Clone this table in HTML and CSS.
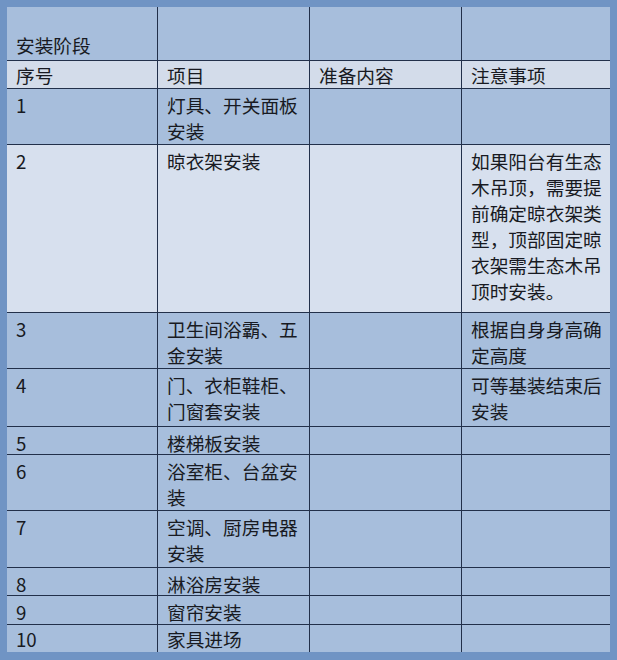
FILE: index.html
```html
<!DOCTYPE html>
<html lang="zh-CN">
<head>
<meta charset="utf-8">
<title>安装阶段</title>
<link rel="stylesheet" href="styles.css">
</head>
<body>
<div class="frame">
  <div class="plan">
    <div class="cell stage">安装阶段</div><div class="cell stage"></div><div class="cell stage"></div><div class="cell stage end"></div>

    <div class="cell head">序号</div><div class="cell head">项目</div><div class="cell head">准备内容</div><div class="cell head end">注意事项</div>

    <div class="cell">1</div><div class="cell">灯具、开关面板安装</div><div class="cell"></div><div class="cell end"></div>

    <div class="cell light">2</div><div class="cell light">晾衣架安装</div><div class="cell light"></div><div class="cell light end">如果阳台有生态木吊顶，需要提前确定晾衣架类型，顶部固定晾衣架需生态木吊顶时安装。</div>

    <div class="cell">3</div><div class="cell">卫生间浴霸、五金安装</div><div class="cell"></div><div class="cell end">根据自身身高确定高度</div>

    <div class="cell">4</div><div class="cell">门、衣柜鞋柜、门窗套安装</div><div class="cell"></div><div class="cell end">可等基装结束后安装</div>

    <div class="cell">5</div><div class="cell">楼梯板安装</div><div class="cell"></div><div class="cell end"></div>

    <div class="cell">6</div><div class="cell">浴室柜、台盆安装</div><div class="cell"></div><div class="cell end"></div>

    <div class="cell">7</div><div class="cell">空调、厨房电器安装</div><div class="cell"></div><div class="cell end"></div>

    <div class="cell">8</div><div class="cell">淋浴房安装</div><div class="cell"></div><div class="cell end"></div>

    <div class="cell">9</div><div class="cell">窗帘安装</div><div class="cell"></div><div class="cell end"></div>

    <div class="cell last">10</div><div class="cell last">家具进场</div><div class="cell last"></div><div class="cell last end"></div>
  </div>
</div>
</body>
</html>
```
FILE: styles.css
```css
html, body {
  margin: 0;
  padding: 0;
  background: #7094c4;
}
.frame {
  width: 617px;
  height: 660px;
  box-sizing: border-box;
  padding: 7px 7px 8px 7px;
  background: #7094c4;
  overflow: hidden;
}
.plan {
  display: grid;
  grid-template-columns: 151px 152px 152px 148px;
  grid-template-rows: 54px 28px 56px 168px 56px 58px 28px 56px 57px 28px 29px 27px;
  width: 603px;
  height: 645px;
  font-family: "Noto Sans CJK SC", sans-serif;
  font-size: 18.7px;
  line-height: 26px;
  color: #181a22;
}
.cell {
  box-sizing: border-box;
  background: #a7bedc;
  padding: 3px 0 0 9px;
  border-right: 1px solid #22304a;
  border-bottom: 1px solid #22304a;
  overflow: hidden;
}
.cell.end { border-right: none; }
.cell.last { border-bottom: none; padding-top: 1px; }
.cell.light { background: #d7e0ee; }
.cell.head { background: #d3dcea; padding-top: 1px; }
.cell.stage {
  display: flex;
  align-items: flex-end;
  padding: 0 0 2px 9px;
}
```
